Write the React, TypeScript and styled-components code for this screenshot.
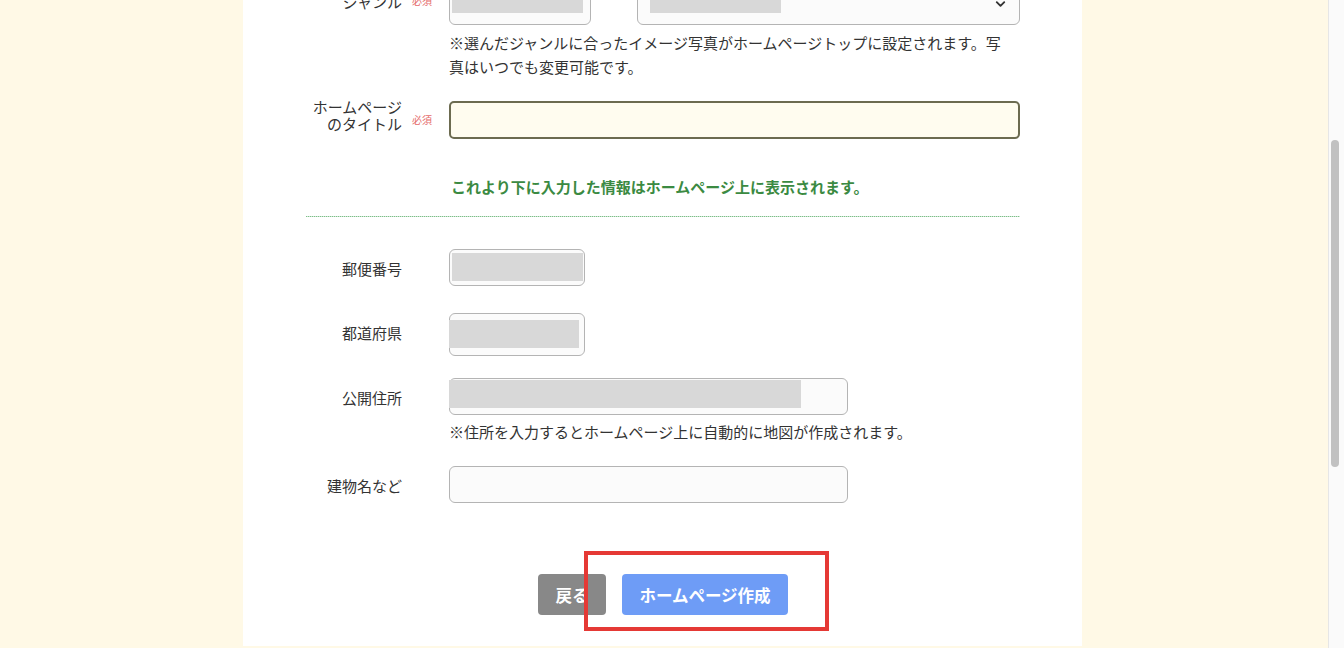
import { useLayoutEffect, useRef, useState } from "react";
import styled, { createGlobalStyle } from "styled-components";
import { ChevronDown } from "lucide-react";

const GlobalStyle = createGlobalStyle`
  html, body {
    margin: 0;
    padding: 0;
    height: 100%;
    overflow: hidden;
  }

  body {
    font-family: "Noto Sans CJK JP", "Noto Sans", sans-serif;
    color: #333;
  }

  * {
    box-sizing: border-box;
  }
`;

type MaskSpec = { top: number; left: number; w: number; h: number };

export default function App() {
  const scrollRef = useRef<HTMLDivElement>(null);
  const genreRef = useRef<HTMLDivElement>(null);
  const [thumb, setThumb] = useState({ top: 140, height: 327 });

  // the screenshot was taken scrolled down to the genre row
  useLayoutEffect(() => {
    const box = scrollRef.current;
    const genre = genreRef.current;
    if (!box || !genre) return;
    const offset =
      genre.getBoundingClientRect().top -
      box.getBoundingClientRect().top +
      box.scrollTop;
    box.scrollTop = offset + 18;

    const track = box.clientHeight;
    setThumb({
      top: (box.scrollTop / box.scrollHeight) * track,
      height: (box.clientHeight / box.scrollHeight) * track,
    });
  }, []);

  return (
    <>
      <GlobalStyle />
      <Shell>
        <Page ref={scrollRef}>
          <Panel>
            <Heading>ホームページ作成</Heading>

            <Form>
              <Row>
                <Label>メールアドレス</Label>
                <Required>必須</Required>
                <Control>
                  <Box $w={399} $h={37} />
                </Control>
              </Row>

              <Row>
                <Label>パスワード</Label>
                <Required>必須</Required>
                <Control>
                  <Box $w={399} $h={37} />
                </Control>
              </Row>

              <Row ref={genreRef}>
                <Label>ジャンル</Label>
                <Required>必須</Required>
                <Control>
                  <SelectPair>
                    <SelectField w={142} mask={{ top: 6, left: 2, w: 131, h: 24 }} />
                    <SelectField w={383} mask={{ top: 6, left: 12, w: 131, h: 24 }} />
                  </SelectPair>
                  <Note $narrow>
                    ※選んだジャンルに合ったイメージ写真がホームページトップに設定されます。写真はいつでも変更可能です。
                  </Note>
                </Control>
              </Row>

              <Row>
                <Label $compact>
                  ホームページ
                  <br />
                  のタイトル
                </Label>
                <Required>必須</Required>
                <Control>
                  <TitleInput />
                </Control>
              </Row>
            </Form>

            <Notice>これより下に入力した情報はホームページ上に表示されます。</Notice>
            <Divider />

            <Form $spaced>
              <Row>
                <Label>郵便番号</Label>
                <span />
                <Control>
                  <Box $w={136} $h={37}>
                    <MaskBlock m={{ top: 3, left: 2, w: 131, h: 28 }} />
                  </Box>
                </Control>
              </Row>

              <Row>
                <Label>都道府県</Label>
                <span />
                <Control>
                  <SelectField w={136} mask={{ top: 6, left: -1, w: 130, h: 28 }} />
                </Control>
              </Row>

              <Row>
                <Label>公開住所</Label>
                <span />
                <Control>
                  <Box $w={399} $h={37}>
                    <MaskBlock m={{ top: 1, left: -1, w: 352, h: 28 }} />
                  </Box>
                  <Note $tight>※住所を入力するとホームページ上に自動的に地図が作成されます。</Note>
                </Control>
              </Row>

              <Row>
                <Label>建物名など</Label>
                <span />
                <Control>
                  <Box $w={399} $h={37} />
                </Control>
              </Row>
            </Form>

            <Buttons>
              <Button $variant="back">戻る</Button>
              <Highlight>
                <Button $variant="primary">ホームページ作成</Button>
                <RedFrame />
              </Highlight>
            </Buttons>
          </Panel>
        </Page>

        <ScrollRail>
          <Thumb style={{ marginTop: thumb.top, height: thumb.height }} />
        </ScrollRail>
      </Shell>
    </>
  );
}

function MaskBlock({ m }: { m: MaskSpec }) {
  return (
    <Mask style={{ top: m.top, left: m.left, width: m.w, height: m.h }} />
  );
}

function SelectField({ w, mask }: { w: number; mask: MaskSpec }) {
  return (
    <Box $w={w} $h={43}>
      <Chevron>
        <ChevronDown size={15} strokeWidth={3} />
      </Chevron>
      <MaskBlock m={mask} />
    </Box>
  );
}

const Shell = styled.div`
  display: flex;
  height: 100vh;
`;

const Page = styled.div`
  flex: 1;
  overflow-y: scroll;
  background: #fff9e6;
  padding: 30px 3px 361px 0;
  scrollbar-width: none;

  &::-webkit-scrollbar {
    display: none;
  }
`;

const ScrollRail = styled.div`
  width: 16px;
  flex-shrink: 0;
  background: #fafafa;
  border-left: 1px solid #e6e6e6;
  padding: 0 5px 0 2px;
`;

const Thumb = styled.div`
  width: 8px;
  border-radius: 4px;
  background: #c1c1c1;
`;

const Panel = styled.div`
  width: 839px;
  margin: 0 auto;
  background: #fff;
  padding: 40px 62px 31px 63px;
`;

const Heading = styled.h2`
  margin: 0 0 25px;
  font-size: 24px;
  line-height: 36px;
  font-weight: 700;
  text-align: center;
`;

const Form = styled.div<{ $spaced?: boolean }>`
  display: flex;
  flex-direction: column;
  gap: 22px;
  margin-top: ${(p) => (p.$spaced ? "32px" : "0")};
`;

const Row = styled.div`
  display: grid;
  grid-template-columns: 96px 47px 1fr;
  align-items: start;
  min-height: 42px;
`;

const Label = styled.div<{ $compact?: boolean }>`
  text-align: right;
  font-size: 15px;
  line-height: ${(p) => (p.$compact ? "17px" : "24px")};
  padding-top: ${(p) => (p.$compact ? "0" : "8px")};
  margin-top: ${(p) => (p.$compact ? "-3px" : "0")};
  color: #333;
  white-space: nowrap;
`;

const Required = styled.span`
  padding: 12px 0 0 10px;
  font-size: 10px;
  line-height: 14px;
  color: #e56b6b;
`;

const Control = styled.div`
  display: flex;
  flex-direction: column;
`;

const SelectPair = styled.div`
  display: flex;
  gap: 46px;
`;

const Box = styled.div<{ $w: number; $h: number }>`
  position: relative;
  width: ${(p) => p.$w}px;
  height: ${(p) => p.$h}px;
  border: 1px solid #b4b4b4;
  border-radius: 6px;
  background: #fbfbfb;
`;

const Mask = styled.span`
  position: absolute;
  background: #d8d8d8;
`;

const Chevron = styled.span`
  position: absolute;
  right: 11px;
  top: 50%;
  transform: translateY(-50%);
  display: flex;
  color: #333;
`;

const TitleInput = styled.input`
  width: 571px;
  height: 38px;
  border: 2px solid #6c6b50;
  border-radius: 5px;
  background: #fffcef;
  outline: none;
  font: inherit;
  padding: 0 10px;
`;

const Note = styled.p<{ $narrow?: boolean; $tight?: boolean }>`
  margin: ${(p) => (p.$tight ? "5px" : "6px")} 0 0;
  max-width: ${(p) => (p.$narrow ? "560px" : "none")};
  font-size: 15px;
  line-height: 24px;
  color: #333;
`;

const Notice = styled.p`
  margin: 32px 0 0 145px;
  font-size: 15px;
  line-height: 24px;
  font-weight: 700;
  color: #3b8a42;
`;

const Divider = styled.div`
  margin-top: 17px;
  height: 1px;
  background: repeating-linear-gradient(
    90deg,
    #7cbf88 0 1px,
    #cfe6d3 1px 2px
  );
`;

const Buttons = styled.div`
  display: flex;
  justify-content: center;
  gap: 16px;
  margin-top: 66px;
`;

const Button = styled.button<{ $variant: "back" | "primary" }>`
  height: 41px;
  padding: 0 17.5px;
  border: none;
  border-radius: 4px;
  background: ${(p) => (p.$variant === "primary" ? "#6e9cf6" : "#888888")};
  color: #fff;
  font-family: inherit;
  font-size: 16.5px;
  font-weight: 700;
  cursor: pointer;
`;

const Highlight = styled.div`
  position: relative;
`;

const RedFrame = styled.span`
  position: absolute;
  top: -23px;
  left: -38px;
  right: -41px;
  bottom: -16px;
  border: 4px solid #e53935;
  pointer-events: none;
`;
